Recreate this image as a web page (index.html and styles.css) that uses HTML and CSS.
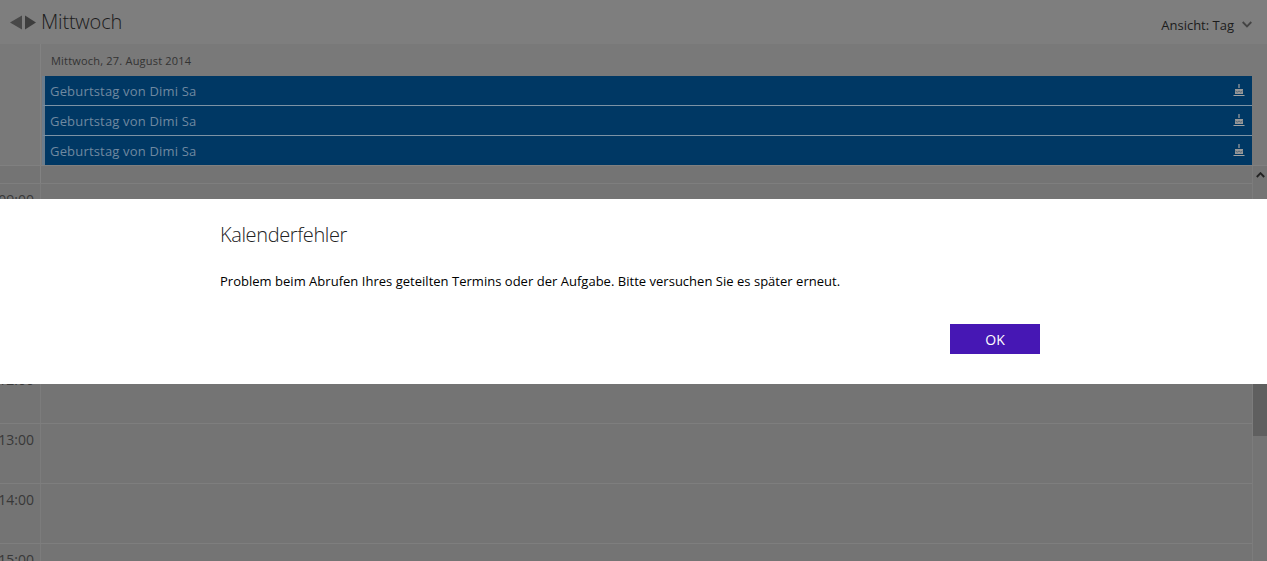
FILE: index.html
```html
<!DOCTYPE html>
<html lang="de">
<head>
    <meta charset="UTF-8">
    <meta name="viewport" content="width=device-width, initial-scale=1.0">
    <link rel="stylesheet" href="styles.css">
    <title>Kalender</title>
</head>
<body>
    <div class="calendar">
        <!-- Kopfzeile -->
        <div class="top-bar">
            <div class="day-nav">
                <svg class="nav-arrows" width="26" height="15" viewBox="0 0 26 15">
                    <path class="arrow-left" d="M0 7.5 L12 0.5 V14.5 Z"/>
                    <path class="arrow-right" d="M15 0.5 L26 7.5 L15 14.5 Z"/>
                </svg>
                <span class="day-title">Mittwoch</span>
            </div>
            <div class="view-switch">
                <span>Ansicht: Tag</span>
                <svg width="10" height="7" viewBox="0 0 10 7"><path d="M0.7 1 L5 5.4 L9.3 1" fill="none" stroke="#444" stroke-width="1.8"/></svg>
            </div>
        </div>

        <!-- Ganztaegige Termine -->
        <div class="all-day">
            <div class="gutter"></div>
            <div class="all-day-main">
                <div class="date-label">Mittwoch, 27. August 2014</div>
                <div class="event">
                    <span>Geburtstag von Dimi Sa</span>
                    <svg class="cake" width="12" height="13" viewBox="0 0 12 13"><path d="M6 0 V4 M0.5 11.5 H11.5" fill="none" stroke="#a0a0a0" stroke-width="1.2"/><path d="M2 5 H10 V10 H2 Z" fill="#979797"/><path d="M2.5 7 L4.2 8.2 L6 7 L7.8 8.2 L9.5 7" fill="none" stroke="#3f5a70" stroke-width="0.8"/></svg>
                </div>
                <div class="event">
                    <span>Geburtstag von Dimi Sa</span>
                    <svg class="cake" width="12" height="13" viewBox="0 0 12 13"><path d="M6 0 V4 M0.5 11.5 H11.5" fill="none" stroke="#a0a0a0" stroke-width="1.2"/><path d="M2 5 H10 V10 H2 Z" fill="#979797"/><path d="M2.5 7 L4.2 8.2 L6 7 L7.8 8.2 L9.5 7" fill="none" stroke="#3f5a70" stroke-width="0.8"/></svg>
                </div>
                <div class="event">
                    <span>Geburtstag von Dimi Sa</span>
                    <svg class="cake" width="12" height="13" viewBox="0 0 12 13"><path d="M6 0 V4 M0.5 11.5 H11.5" fill="none" stroke="#a0a0a0" stroke-width="1.2"/><path d="M2 5 H10 V10 H2 Z" fill="#979797"/><path d="M2.5 7 L4.2 8.2 L6 7 L7.8 8.2 L9.5 7" fill="none" stroke="#3f5a70" stroke-width="0.8"/></svg>
                </div>
            </div>
            <div class="scroll-gap"></div>
        </div>

        <!-- Stundenraster -->
        <div class="grid-wrap">
            <div class="hours">
                <div class="spacer-row"><div class="gutter"></div><div class="cell"></div></div>
                <div class="hour-row"><div class="hour">09:00</div><div class="cell"></div></div>
                <div class="hour-row"><div class="hour">10:00</div><div class="cell"></div></div>
                <div class="hour-row"><div class="hour">11:00</div><div class="cell"></div></div>
                <div class="hour-row"><div class="hour">12:00</div><div class="cell"></div></div>
                <div class="hour-row"><div class="hour">13:00</div><div class="cell"></div></div>
                <div class="hour-row"><div class="hour">14:00</div><div class="cell"></div></div>
                <div class="hour-row"><div class="hour">15:00</div><div class="cell"></div></div>
            </div>
            <div class="scrollbar">
                <svg class="scroll-up" width="9" height="6" viewBox="0 0 9 6"><path d="M0.8 5 L4.5 1.2 L8.2 5" fill="none" stroke="#222" stroke-width="1.9"/></svg>
                <div class="scroll-thumb"></div>
            </div>
        </div>
    </div>

    <!-- Fehlermeldung -->
    <div class="dialog">
        <div class="dialog-inner">
            <h1>Kalenderfehler</h1>
            <p>Problem beim Abrufen Ihres geteilten Termins oder der Aufgabe. Bitte versuchen Sie es später erneut.</p>
            <div class="dialog-buttons">
                <button class="ok-button">OK</button>
            </div>
        </div>
    </div>
</body>
</html>
```
FILE: styles.css
```css
html, body {
    margin: 0;
    padding: 0;
    height: 561px;
    overflow: hidden;
}

body {
    font-family: "Open Sans", "Noto Sans", sans-serif;
    background-color: #747474;
    position: relative;
}

.calendar {
    display: flex;
    flex-direction: column;
    height: 561px;
}

/* Kopfzeile */
.top-bar {
    height: 44px;
    display: flex;
    justify-content: space-between;
    align-items: center;
    background-color: #7e7e7e;
    flex-shrink: 0;
}

.day-nav {
    display: flex;
    align-items: center;
    padding-left: 10px;
    gap: 5px;
}

.arrow-left { fill: #484848; }
.arrow-right { fill: #3d3d3d; }

.day-title {
    font-size: 20px;
    font-weight: 300;
    color: #1c1c1c;
    letter-spacing: -0.2px;
    line-height: 48px;
}

.view-switch {
    display: flex;
    align-items: center;
    gap: 8px;
    padding: 5px 15px 0 0;
    font-size: 13px;
    color: #1c1c1c;
}

/* Ganztaegig */
.all-day {
    display: flex;
    height: 121px;
    flex-shrink: 0;
    background-color: #797979;
    border-bottom: 1px solid #808080;
}

.gutter {
    width: 40px;
    flex-shrink: 0;
    border-right: 1px solid #828282;
}

.all-day-main {
    flex: 1;
    padding-left: 1px;
}

.scroll-gap {
    width: 15px;
    flex-shrink: 0;
}

.date-label {
    height: 32px;
    line-height: 33px;
    padding-left: 9px;
    font-size: 11px;
    letter-spacing: 0.2px;
    color: #333333;
}

.event {
    height: 29px;
    display: flex;
    align-items: center;
    justify-content: space-between;
    padding: 0 7px 0 5px;
    background-color: #003864;
    border-bottom: 1px solid #7c93a5;
    border-left: 3px solid #6b7d8d;
    font-size: 13px;
    letter-spacing: 0.18px;
    color: #7089a0;
}

.event:last-child {
    border-bottom: 0;
}

.cake {
    display: block;
}

/* Stundenraster */
.grid-wrap {
    display: flex;
    flex: 1;
    min-height: 0;
    overflow: hidden;
}

.hours {
    flex: 1;
}

.spacer-row {
    display: flex;
    height: 17px;
    border-bottom: 1px solid #7e7e7e;
}

.hour-row {
    display: flex;
    height: 59px;
    border-bottom: 1px solid #7e7e7e;
}

.hour {
    width: 34px;
    padding-right: 6px;
    flex-shrink: 0;
    display: flex;
    justify-content: flex-end;
    font-size: 14px;
    line-height: 32px;
    color: #383838;
    border-right: 1px solid #7c7c7c;
}

.cell {
    flex: 1;
}

.scrollbar {
    width: 14px;
    flex-shrink: 0;
    border-left: 1px solid #7c7c7c;
}

.scroll-up {
    display: block;
    margin: 6px auto 0;
}

.scroll-thumb {
    height: 228px;
    margin-top: 30px;
    background-color: #5f5f5f;
}

/* Dialog */
.dialog {
    position: absolute;
    top: 199px;
    left: 0;
    right: 0;
    height: 185px;
    background-color: #ffffff;
}

.dialog-inner {
    width: 820px;
    margin-left: 220px;
}

.dialog h1 {
    margin: 0;
    padding-top: 22px;
    font-size: 20px;
    line-height: 28px;
    font-weight: 300;
    letter-spacing: -0.38px;
    color: #222222;
}

.dialog p {
    margin: 22px 0 0;
    font-size: 13px;
    line-height: 20px;
    letter-spacing: 0.02px;
    color: #000000;
}

.dialog-buttons {
    display: flex;
    justify-content: flex-end;
    margin-top: 33px;
}

.ok-button {
    width: 90px;
    height: 30px;
    border: 0;
    padding: 0;
    background-color: #4617b4;
    color: #ffffff;
    font-family: inherit;
    font-size: 14px;
}
```
